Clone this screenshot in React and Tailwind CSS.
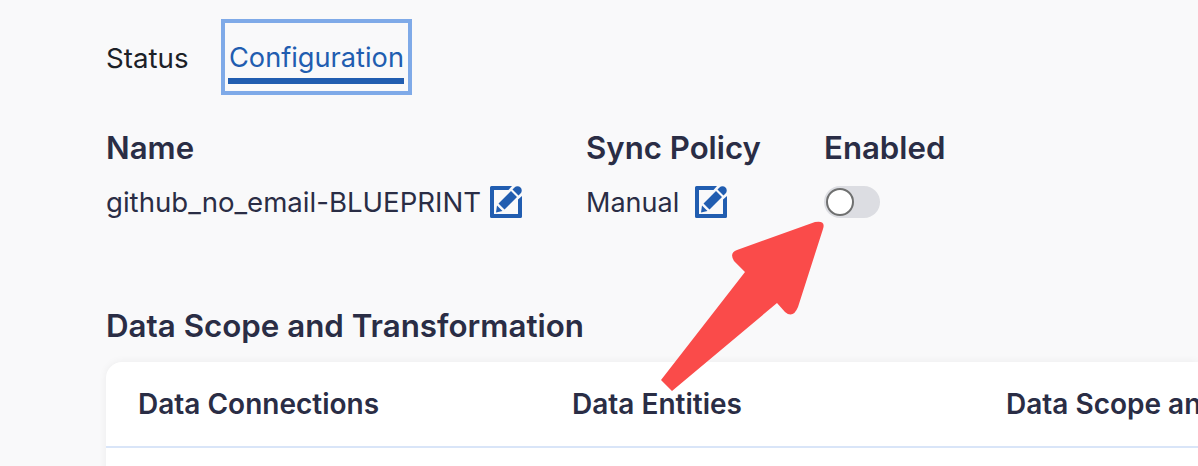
const AnnotationIcon = () => (
    <svg viewBox="0 0 32 32" className="w-8 h-8 shrink-0 text-[#215db0]" fill="currentColor">
        <path d="M1.5 0H22L18.500 4H4V28H28V13.500L32 10V30.500A1.500 1.500 0 0 1 30.500 32H1.500A1.500 1.500 0 0 1 0 30.500V1.500A1.500 1.500 0 0 1 1.500 0Z" />
        <path d="M8.500 17.500L21 5L27 11L14.500 23.500ZM7 19.500L12.500 25L6 26.500ZM22.500 3.500L24.500 1.500A3 3 0 0 1 30.500 7.500L28.500 9.500Z" />
    </svg>
);

const Heading = ({ children }) => (
    <h3 className="text-[31.2px] leading-[36px] font-semibold text-[#2a2d45]">{children}</h3>
);

const Arrow = () => (
    <svg className="absolute left-0 top-0 pointer-events-none" width="1198" height="466" fill="#fa4b4a">
        <path d="M661 380L745 272L734 261Q729 253 737 250L815 222Q826 220 823 229L798 307Q793 319 785 312L777 303L672 391Z" />
    </svg>
);

export default function App() {
    return (
        <div className="relative h-[466px] overflow-hidden bg-[#f9f9fa] pl-[106px] pt-[19px] font-['Inter',sans-serif] text-[#2a2d45]">
            {/* Tabs */}
            <div className="flex items-start gap-[33px] h-[76px]">
                <div className="w-[82px] pt-[20px] text-[27.7px] leading-[38px] text-[#1c2127]">Status</div>
                <div className="border-4 border-[#7faae8] h-[76px] w-[191px] px-[3px] pt-[16px] text-[27.2px] leading-[38px] text-[#215db0] whitespace-nowrap">
                    <div className="h-[45px] border-b-[6px] border-[#215db0] w-[176px] pl-[1px]">Configuration</div>
                </div>
            </div>

            {/* Blueprint settings */}
            <div className="flex mt-[35px]">
                <div className="w-[480px]">
                    <Heading>Name</Heading>
                    <div className="flex items-center gap-[9px] mt-[20px] h-8 text-[27.6px]">
                        <span className="relative top-[1px]">github_no_email-BLUEPRINT</span>
                        <AnnotationIcon />
                    </div>
                </div>
                <div className="w-[238px]">
                    <Heading>Sync Policy</Heading>
                    <div className="flex items-center gap-[16px] mt-[20px] h-8 text-[27px]">
                        <span className="relative top-[1px]">Manual</span>
                        <AnnotationIcon />
                    </div>
                </div>
                <div>
                    <Heading>Enabled</Heading>
                    <div className="mt-[20px] h-8 w-14 rounded-full bg-[#dcdde2] p-[1px]">
                        <div className="w-[28px] h-[28px] mt-[1px] ml-[1px] rounded-full bg-white border-2 border-[#6f7070]" />
                    </div>
                </div>
            </div>

            <h3 className="mt-[90px] text-[31.3px] leading-[36px] font-semibold">Data Scope and Transformation</h3>

            {/* Table */}
            <div className="mt-[18px] h-[200px] bg-white rounded-tl-[16px] shadow-[0_0_8px_rgba(0,0,0,0.06)]">
                <div className="flex h-[86px] items-center pl-8 border-b-2 border-[#d9e5f8] text-[28px] font-semibold whitespace-nowrap">
                    <div className="w-[434px] shrink-0">Data Connections</div>
                    <div className="w-[434px] shrink-0">Data Entities</div>
                    <div>Data Scope and Transformation</div>
                </div>
            </div>

            <Arrow />
        </div>
    );
}
